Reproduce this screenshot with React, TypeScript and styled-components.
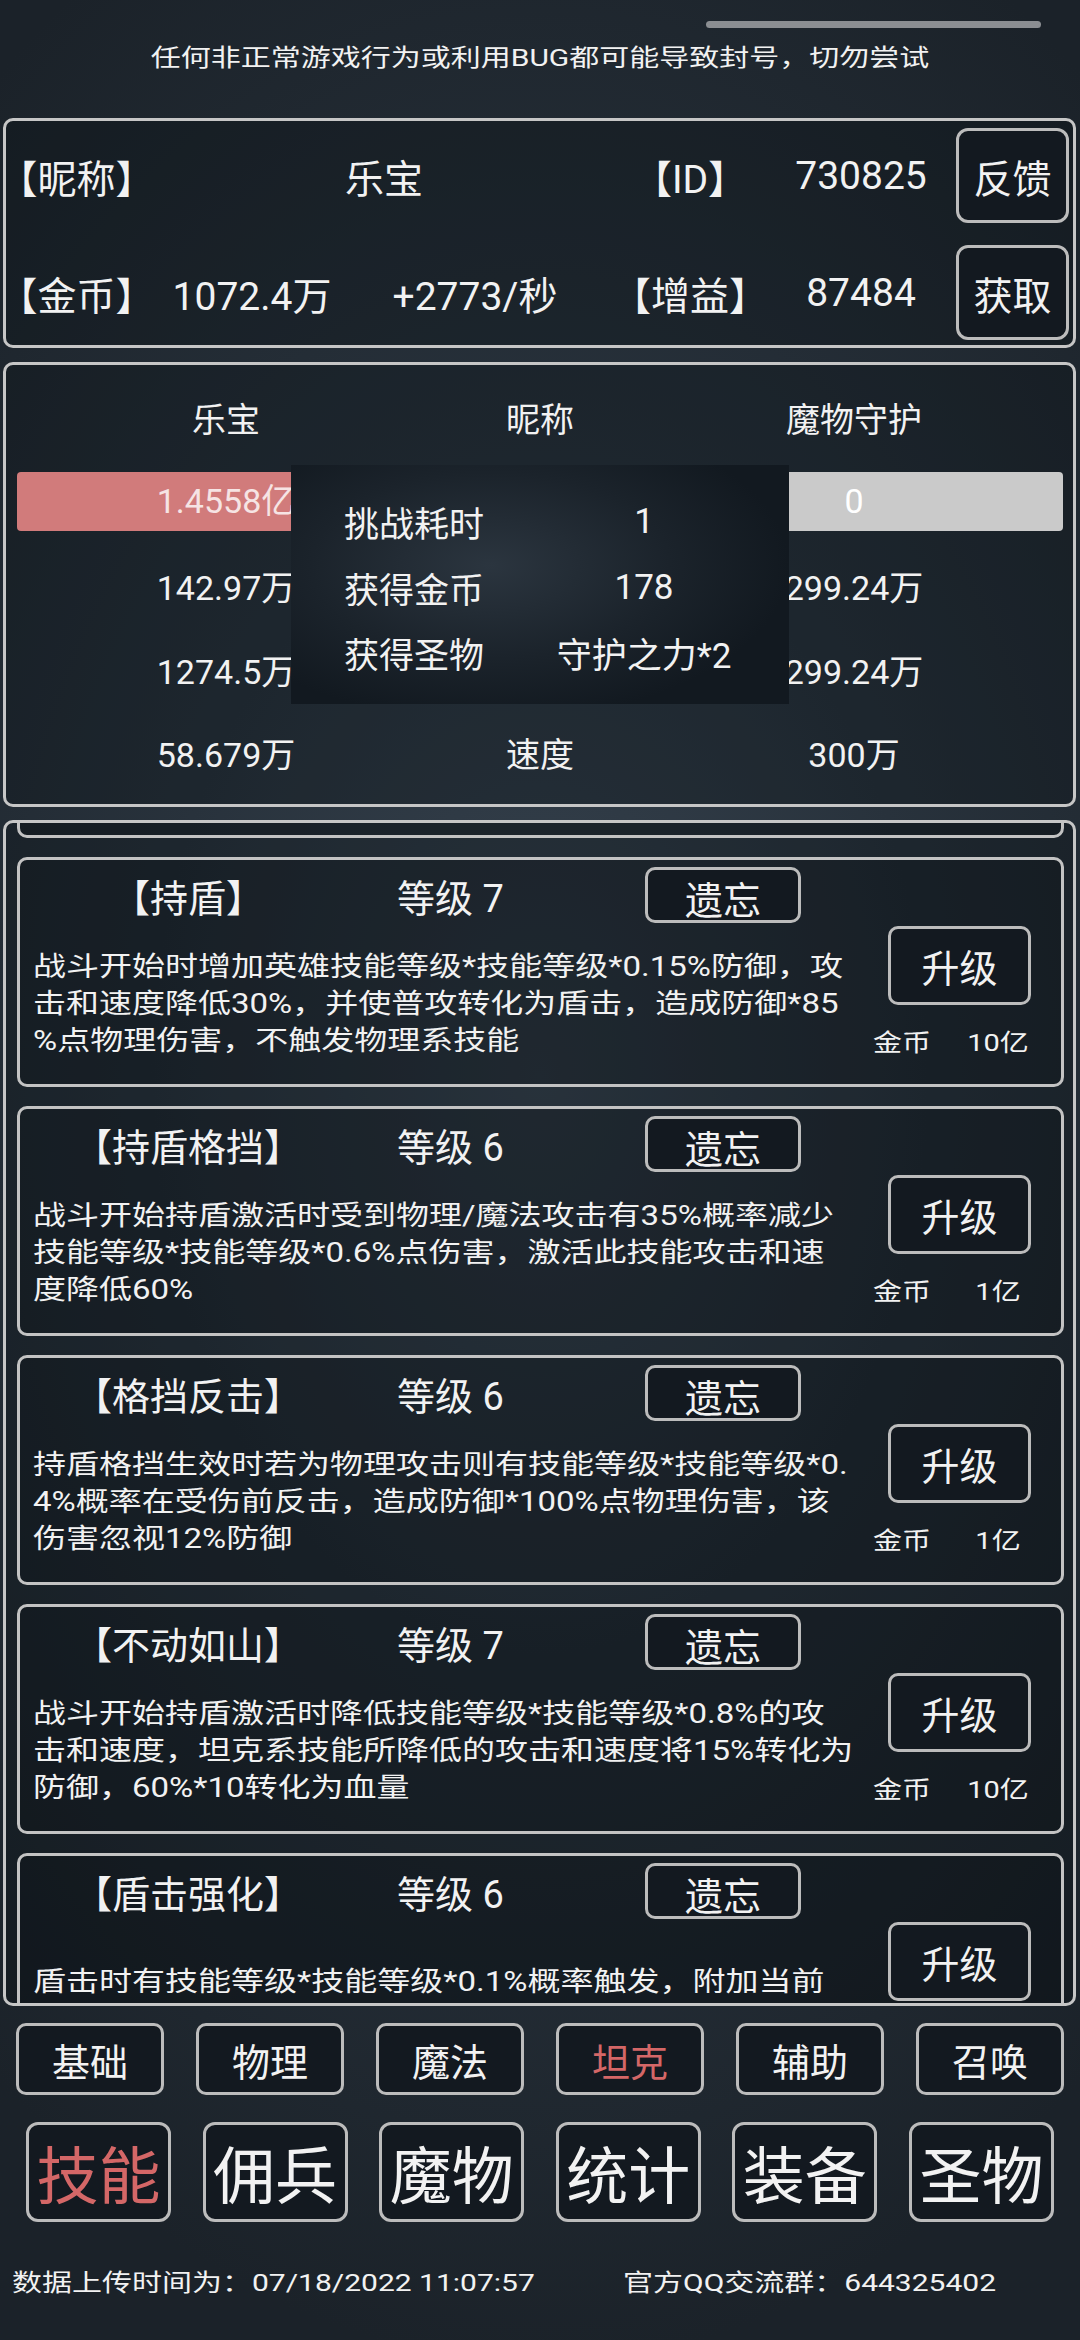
import React from "react";
import styled, { createGlobalStyle } from "styled-components";

const GlobalStyle = createGlobalStyle`
  html, body {
    margin: 0;
    padding: 0;
  }
  body {
    width: 1080px;
    height: 2340px;
    overflow: hidden;
    background: radial-gradient(ellipse 80% 55% at 50% 46%, #36424e 0%, #28323c 45%, #1b2229 100%);
    color: #f2f2f2;
    font-family: Roboto, "Noto Sans CJK SC", sans-serif;
  }
`;

const Page = styled.div`
  width: 1080px;
  height: 2340px;
  display: flex;
  flex-direction: column;
`;

const Header = styled.header`
  height: 118px;
  display: flex;
  flex-direction: column;
`;

const ScrollPill = styled.div`
  align-self: flex-end;
  margin: 21px 39px 0 0;
  width: 335px;
  height: 7px;
  border-radius: 4px;
  background: #8b8e92;
`;

const Notice = styled.div`
  margin-top: 15px;
  height: 30px;
  line-height: 30px;
  font-size: 30px;
  text-align: center;
  transform: scaleY(0.78);
`;

const Panel = styled.section<{ $height: number; $gap: number }>`
  position: relative;
  box-sizing: border-box;
  height: ${(p) => p.$height}px;
  margin: ${(p) => p.$gap}px 4px 0 3px;
  border: 3px solid #c6c6c6;
  border-radius: 10px;
  background: rgba(8, 12, 16, 0.3);
  overflow: hidden;
`;

/* ---------- player info ---------- */

const InfoGrid = styled.div`
  display: grid;
  grid-template-columns: 150px 168px 278px 152px 190px 113px;
  grid-template-rows: 95px 95px;
  row-gap: 22px;
  padding: 7px 0 0 12px;
  align-items: center;
  font-size: 39px;
`;

const Label = styled.div<{ $align?: string }>`
  text-align: ${(p) => p.$align || "center"};
  font-feature-settings: "halt";
  white-space: nowrap;
`;

const Value = styled.div<{ $span?: number; $shift?: number }>`
  grid-column: span ${(p) => p.$span || 1};
  text-align: center;
  white-space: nowrap;
  padding-right: ${(p) => p.$shift || 0}px;
`;

const Button = styled.button`
  box-sizing: border-box;
  padding: 0;
  border: 3px solid #bcbcbc;
  background: #131920;
  color: #f2f2f2;
  font-family: inherit;
  white-space: nowrap;
`;

const SideButton = styled(Button)`
  width: 113px;
  height: 95px;
  border-radius: 12px;
  font-size: 39px;
`;

/* ---------- battle panel ---------- */

const BattleGrid = styled.div`
  display: grid;
  grid-template-columns: 418px 1fr 418px;
  grid-template-rows: 83px 84px 85px 83px 83px;
  align-items: center;
  padding: 11px 10px 0 11px;
  font-size: 34px;
  text-align: center;
`;

const Cell = styled.div`
  white-space: nowrap;
`;

const Bar = styled.div<{ $tone: "red" | "gray" }>`
  height: 59px;
  line-height: 59px;
  border-radius: 4px;
  background: ${(p) => (p.$tone === "red" ? "#d17b7b" : "#cacaca")};
  color: ${(p) => (p.$tone === "red" ? "#f6e4e4" : "#ffffff")};
`;

const ResultPopup = styled.div`
  position: absolute;
  top: 100px;
  left: 285px;
  width: 498px;
  height: 239px;
  box-sizing: border-box;
  padding: 24px 0 0 53px;
  background: radial-gradient(ellipse 60% 65% at 40% 42%, #2b353f 0%, #1b232b 60%, #121920 100%);
  display: grid;
  grid-template-columns: 140px 280px;
  grid-auto-rows: 65.5px;
  column-gap: 20px;
  align-items: center;
  font-size: 35px;
`;

const PopupValue = styled.div`
  text-align: center;
  white-space: nowrap;
`;

/* ---------- skill list ---------- */

const SkillList = styled.div`
  display: flex;
  flex-direction: column;
  gap: 19px;
  padding: 0 9px 0 11px;
  margin-top: -215px;
`;

const Card = styled.article`
  flex: none;
  height: 230px;
  box-sizing: border-box;
  border: 3px solid #c3c3c3;
  border-radius: 10px;
  background: rgba(8, 12, 16, 0.25);
  display: flex;
  flex-direction: column;
`;

const CardHeader = styled.div`
  display: grid;
  grid-template-columns: 336px 289px 156px;
  height: 56px;
  margin-top: 7px;
  align-items: center;
  font-size: 38px;
`;

const SkillName = styled.div`
  text-align: center;
  font-feature-settings: "halt";
  white-space: nowrap;
`;

const SkillLevel = styled.div`
  padding-left: 41px;
  white-space: nowrap;
`;

const ForgetButton = styled(Button)`
  height: 56px;
  border-radius: 10px;
  font-size: 38px;
`;

const CardBody = styled.div`
  flex: 1;
  display: grid;
  grid-template-columns: 1fr 180px;
  padding-right: 11px;
`;

const Desc = styled.div`
  align-self: center;
  padding-left: 13px;
  font-size: 33px;
`;

const DescLine = styled.div`
  height: 37px;
  line-height: 37px;
  white-space: nowrap;
  transform: scaleY(0.82);
`;

const CardSide = styled.div`
  display: flex;
  flex-direction: column;
  padding-top: 3px;
`;

const UpgradeButton = styled(Button)`
  width: 143px;
  height: 79px;
  margin-left: 18px;
  border-radius: 10px;
  font-size: 38px;
`;

const Cost = styled.div`
  display: grid;
  grid-template-columns: 64px 96px;
  column-gap: 16px;
  margin-top: 23px;
  height: 30px;
  line-height: 30px;
  font-size: 29px;
  text-align: center;
  transform: scaleY(0.82);
`;

/* ---------- tabs & footer ---------- */

const TabRow = styled.nav<{ $gap: number; $left: number; $top: number }>`
  display: flex;
  gap: ${(p) => p.$gap}px;
  padding-left: ${(p) => p.$left}px;
  margin-top: ${(p) => p.$top}px;
`;

const Tab = styled(Button)<{ $active?: boolean; $big?: boolean }>`
  flex: none;
  width: ${(p) => (p.$big ? 145 : 148)}px;
  height: ${(p) => (p.$big ? 100 : 72)}px;
  border-radius: ${(p) => (p.$big ? 12 : 10)}px;
  font-size: ${(p) => (p.$big ? 62 : 38)}px;
  color: ${(p) => (p.$active ? "#d46767" : "#f2f2f2")};
`;

const Footer = styled.footer`
  display: grid;
  grid-template-columns: 611px auto;
  padding-left: 12px;
  margin-top: 46px;
  height: 30px;
  line-height: 30px;
  font-size: 30px;
  white-space: nowrap;
  transform: scaleY(0.8);
`;

type Skill = {
  name: string;
  level: number;
  lines: string[];
  cost: string;
};

// first card is scrolled above the visible area, only its bottom edge shows
const skills: Skill[] = [
  {
    name: "盾击",
    level: 7,
    lines: [],
    cost: "",
  },
  {
    name: "持盾",
    level: 7,
    lines: [
      "战斗开始时增加英雄技能等级*技能等级*0.15%防御，攻",
      "击和速度降低30%，并使普攻转化为盾击，造成防御*85",
      "%点物理伤害，不触发物理系技能",
    ],
    cost: "10亿",
  },
  {
    name: "持盾格挡",
    level: 6,
    lines: [
      "战斗开始持盾激活时受到物理/魔法攻击有35%概率减少",
      "技能等级*技能等级*0.6%点伤害，激活此技能攻击和速",
      "度降低60%",
    ],
    cost: "1亿",
  },
  {
    name: "格挡反击",
    level: 6,
    lines: [
      "持盾格挡生效时若为物理攻击则有技能等级*技能等级*0.",
      "4%概率在受伤前反击，造成防御*100%点物理伤害，该",
      "伤害忽视12%防御",
    ],
    cost: "1亿",
  },
  {
    name: "不动如山",
    level: 7,
    lines: [
      "战斗开始持盾激活时降低技能等级*技能等级*0.8%的攻",
      "击和速度，坦克系技能所降低的攻击和速度将15%转化为",
      "防御，60%*10转化为血量",
    ],
    cost: "10亿",
  },
  {
    name: "盾击强化",
    level: 6,
    lines: ["盾击时有技能等级*技能等级*0.1%概率触发，附加当前", ""],
    cost: "",
  },
];

const categories = ["基础", "物理", "魔法", "坦克", "辅助", "召唤"];
const sections = ["技能", "佣兵", "魔物", "统计", "装备", "圣物"];

const SkillCard = ({ skill, hidden }: { skill: Skill; hidden?: boolean }) => (
  <Card>
    {!hidden && (
      <>
        <CardHeader>
          <SkillName>【{skill.name}】</SkillName>
          <SkillLevel>等级 {skill.level}</SkillLevel>
          <ForgetButton>遗忘</ForgetButton>
        </CardHeader>
        <CardBody>
          <Desc>
            {skill.lines.map((line, i) => (
              <DescLine key={i}>{line}</DescLine>
            ))}
          </Desc>
          <CardSide>
            <UpgradeButton>升级</UpgradeButton>
            {skill.cost && (
              <Cost>
                <span>金币</span>
                <span>{skill.cost}</span>
              </Cost>
            )}
          </CardSide>
        </CardBody>
      </>
    )}
  </Card>
);

export default function App() {
  return (
    <Page>
      <GlobalStyle />
      <Header>
        <ScrollPill />
        <Notice>任何非正常游戏行为或利用BUG都可能导致封号，切勿尝试</Notice>
      </Header>

      <Panel $height={230} $gap={0}>
        <InfoGrid>
          <Label $align="left">【昵称】</Label>
          <Value $span={2} $shift={14}>乐宝</Value>
          <Label>【ID】</Label>
          <Value>730825</Value>
          <SideButton>反馈</SideButton>

          <Label $align="left">【金币】</Label>
          <Value>1072.4万</Value>
          <Value>+2773/秒</Value>
          <Label>【增益】</Label>
          <Value>87484</Value>
          <SideButton>获取</SideButton>
        </InfoGrid>
      </Panel>

      <Panel $height={445} $gap={14}>
        <BattleGrid>
          <Cell>乐宝</Cell>
          <Cell>昵称</Cell>
          <Cell>魔物守护</Cell>

          <Bar $tone="red">1.4558亿</Bar>
          <Cell />
          <Bar $tone="gray">0</Bar>

          <Cell>142.97万</Cell>
          <Cell />
          <Cell>299.24万</Cell>

          <Cell>1274.5万</Cell>
          <Cell />
          <Cell>299.24万</Cell>

          <Cell>58.679万</Cell>
          <Cell>速度</Cell>
          <Cell>300万</Cell>
        </BattleGrid>
        <ResultPopup>
          <div>挑战耗时</div>
          <PopupValue>1</PopupValue>
          <div>获得金币</div>
          <PopupValue>178</PopupValue>
          <div>获得圣物</div>
          <PopupValue>守护之力*2</PopupValue>
        </ResultPopup>
      </Panel>

      <Panel $height={1186} $gap={13}>
        <SkillList>
          {skills.map((s, i) => (
            <SkillCard key={s.name} skill={s} hidden={i === 0} />
          ))}
        </SkillList>
      </Panel>

      <TabRow $gap={32} $left={16} $top={17}>
        {categories.map((c) => (
          <Tab key={c} $active={c === "坦克"}>
            {c}
          </Tab>
        ))}
      </TabRow>

      <TabRow $gap={31.6} $left={26} $top={27}>
        {sections.map((s) => (
          <Tab key={s} $big $active={s === "技能"}>
            {s}
          </Tab>
        ))}
      </TabRow>

      <Footer>
        <span>数据上传时间为：07/18/2022 11:07:57</span>
        <span>官方QQ交流群：644325402</span>
      </Footer>
    </Page>
  );
}
